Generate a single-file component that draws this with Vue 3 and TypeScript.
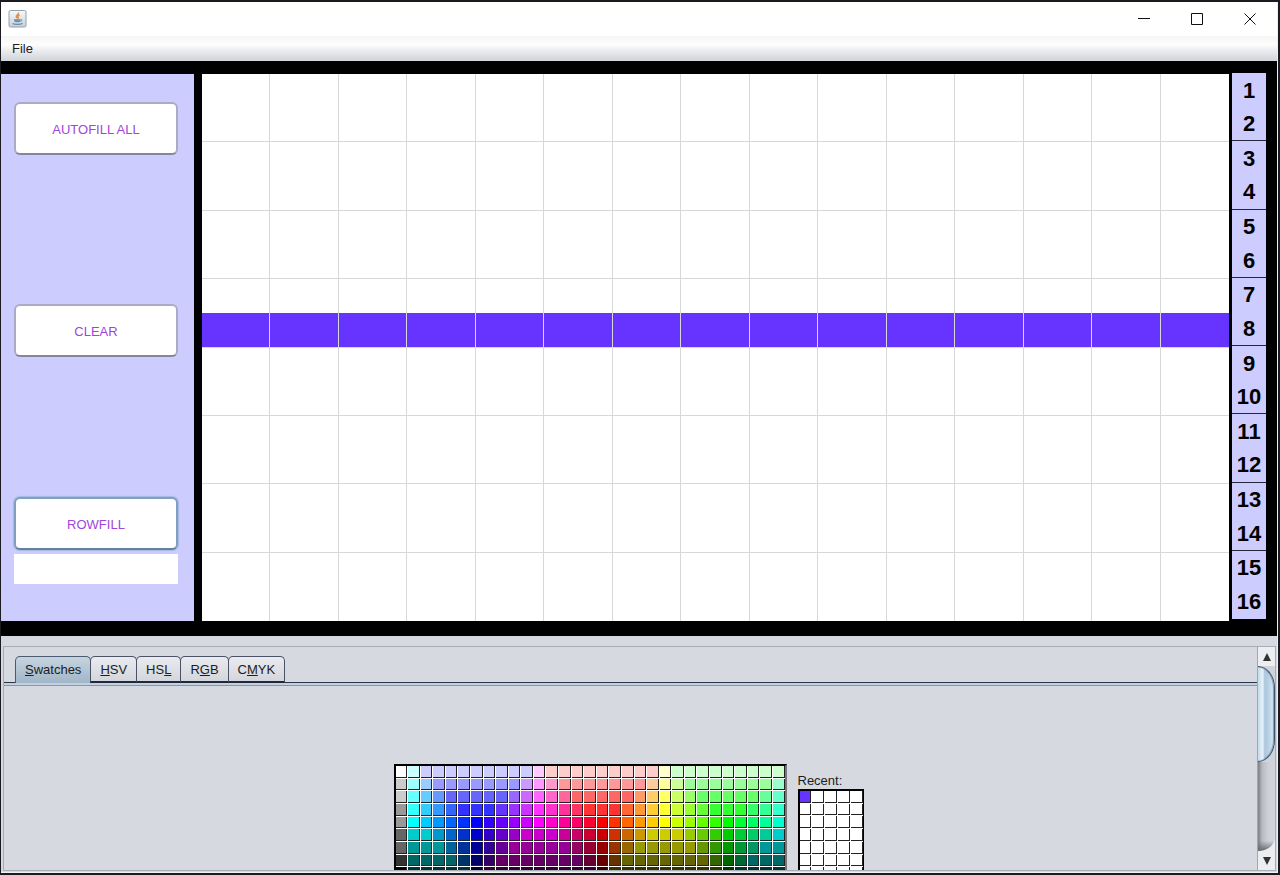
<script setup lang="ts">
import { computed, ref } from 'vue'

type Rgb = [number, number, number]

const COLUMNS = 15
const ROWS = 16

const paint = ref('#6633ff')
const rowInput = ref('')
const cells = ref<string[][]>(
  Array.from({ length: ROWS }, (_, r) => Array.from({ length: COLUMNS }, () => (r === 7 ? '#6633ff' : '#ffffff'))),
)

const fillRow = (row: number, color: string) => {
  if (cells.value[row]) cells.value[row] = cells.value[row].map(() => color)
}
const fillAll = (color: string) => cells.value.forEach((_, r) => fillRow(r, color))
const fillTypedRow = () => fillRow(Number(rowInput.value) - 1, paint.value)

// Thirty fully saturated hues: cyan, blue, magenta, red, yellow, green.
const hues: Rgb[] = []
const steps = [0, 51, 102, 153, 204]
steps.forEach((s) => hues.push([0, 255 - s, 255]))
steps.forEach((s) => hues.push([s, 0, 255]))
steps.forEach((s) => hues.push([255, 0, 255 - s]))
steps.forEach((s) => hues.push([255, s, 0]))
steps.forEach((s) => hues.push([255 - s, 255, 0]))
steps.forEach((s) => hues.push([0, 255, s]))

const greys = [255, 204, 204, 153, 153, 102, 102, 51, 0]
const css = (c: number[]) => `rgb(${c.join(', ')})`

// The first five rows lighten the hues, the last four darken them.
const swatches = greys.flatMap((grey, row) => [
  css([grey, grey, grey]),
  ...hues.map((hue) => css(hue.map((v) => (row < 5 ? Math.max(v, 204 - 51 * row) : Math.min(v, 204 - 51 * (row - 5)))))),
])

const recent = ref<string[]>(['#6633ff'])
const recentSlots = computed(() => Array.from({ length: 35 }, (_, i) => recent.value[i] ?? '#ffffff'))
const choose = (color: string) => {
  paint.value = color
  recent.value = [color, ...recent.value].slice(0, 35)
}

const tabs = [
  { before: '', key: 'S', after: 'watches' },
  { before: '', key: 'H', after: 'SV' },
  { before: 'HS', key: 'L', after: '' },
  { before: 'R', key: 'G', after: 'B' },
  { before: 'C', key: 'M', after: 'YK' },
]
const activeTab = ref(0)
</script>

<template>
  <div class="desktop">
    <div class="window">
      <header class="titlebar">
        <svg class="app-icon" width="20" height="20" viewBox="0 0 20 20" aria-hidden="true">
          <defs>
            <linearGradient id="tile" x1="0" y1="0" x2="0" y2="1">
              <stop offset="0" stop-color="#f7f9fa" />
              <stop offset="1" stop-color="#c6d1d8" />
            </linearGradient>
          </defs>
          <rect x="2" y="1.5" width="17" height="16.5" rx="1.5" fill="url(#tile)" stroke="#93a1ac" />
          <path d="M11.500 3.500c.6 2-2.700 2.600-2.200 4.300.2.700.9 1 1 1.700M12.500 6c-1.400.6-2 1.400-1.400 2.200.4.600.2 1-.2 1.500" fill="none" stroke="#e08a45" stroke-width="1.400" />
          <path d="M7 10.300h6.500c0 2-.8 3-2 3h-2.500c-1.200 0-2-1-2-3z" fill="#6f90a8" />
          <path d="M13.500 10.500c2-.4 1.800 1.700-.6 1.900" fill="none" stroke="#6f90a8" />
          <path d="M5.500 14.500c1.500 1.200 8.500 1.200 10-.2" fill="none" stroke="#6b8fac" stroke-width="1.200" />
        </svg>
        <div class="window-buttons">
          <button type="button" aria-label="Minimize">
            <svg width="12" height="12" viewBox="0 0 12 12"><path d="M0 5.500h12" /></svg>
          </button>
          <button type="button" aria-label="Maximize">
            <svg width="12" height="12" viewBox="0 0 12 12"><path d="M.5.5h11v11H.5z" /></svg>
          </button>
          <button type="button" aria-label="Close">
            <svg width="12" height="12" viewBox="0 0 12 12"><path d="M.5.5l11 11M11.500.5l-11 11" /></svg>
          </button>
        </div>
      </header>

      <nav class="menubar"><button type="button">File</button></nav>

      <main class="editor">
        <section class="tools">
          <button type="button" class="tool" @click="fillAll(paint)">AUTOFILL ALL</button>
          <button type="button" class="tool" @click="fillAll('#ffffff')">CLEAR</button>
          <div class="rowfill">
            <button type="button" class="tool focused" @click="fillTypedRow">ROWFILL</button>
            <input v-model="rowInput" type="text" aria-label="Row number" />
          </div>
        </section>

        <section class="canvas">
          <template v-for="(row, r) in cells" :key="r">
            <div
              v-for="(color, c) in row"
              :key="c"
              class="cell"
              :class="{ closing: r % 2 === 1 && r < ROWS - 1, last: c === COLUMNS - 1 }"
              :style="{ backgroundColor: color }"
              @click="row[c] = paint"
            ></div>
          </template>
        </section>

        <ol class="row-numbers">
          <li v-for="n in ROWS" :key="n">{{ n }}</li>
        </ol>
      </main>

      <section class="chooser">
        <div class="scroll-pane">
          <div class="view">
            <div class="tabs" role="tablist">
              <button
                v-for="(tab, i) in tabs"
                :key="i"
                type="button"
                role="tab"
                class="tab"
                :class="{ active: i === activeTab }"
                :aria-selected="i === activeTab"
                @click="activeTab = i"
              >{{ tab.before }}<u>{{ tab.key }}</u>{{ tab.after }}</button>
            </div>
            <div class="tab-rule"></div>
            <div class="palettes">
              <div class="palette main">
                <button v-for="(color, i) in swatches" :key="i" type="button" :aria-label="color" :style="{ backgroundColor: color }" @click="choose(color)"></button>
              </div>
              <div class="recent">
                <span>Recent:</span>
                <div class="palette small">
                  <button v-for="(color, i) in recentSlots" :key="i" type="button" :aria-label="color" :style="{ backgroundColor: color }" @click="paint = color"></button>
                </div>
              </div>
            </div>
          </div>
          <div class="scrollbar">
            <button type="button" aria-label="Scroll up">
              <svg width="8" height="8" viewBox="0 0 8 8"><path d="M4 0l4 8H0z" /></svg>
            </button>
            <div class="track">
              <div class="thumb"></div>
              <div class="groove"></div>
            </div>
            <button type="button" aria-label="Scroll down">
              <svg width="8" height="8" viewBox="0 0 8 8"><path d="M0 0h8L4 8z" /></svg>
            </button>
          </div>
        </div>
      </section>
    </div>
  </div>
</template>

<style>
body {
  margin: 0;
}
</style>

<style scoped>
* {
  box-sizing: border-box;
}

button {
  font: inherit;
  color: inherit;
  padding: 0;
  margin: 0;
  border: 0;
  background: none;
}

.desktop {
  height: 100vh;
  padding: 2px 2px 2px 1px;
  background: #1c1a21;
  font-family: "Liberation Sans", Arial, sans-serif;
  font-size: 13px;
  line-height: 16px;
  color: #1c1c22;
}

.window {
  height: 100%;
  display: grid;
  grid-template-rows: 34px 25px minmax(0, 575fr) minmax(0, 237fr);
  border-right: 1px solid #eceef0;
  background: #fff;
}

.titlebar {
  display: flex;
  align-items: center;
  justify-content: space-between;
  padding: 0 1px 1px 6px;
}

.window-buttons {
  display: flex;
}

.window-buttons button {
  width: 53px;
  height: 33px;
  display: grid;
  place-items: center;
}

.window-buttons svg {
  fill: none;
  stroke: #111;
}

.menubar {
  display: flex;
  align-items: center;
  padding-left: 11px;
  background: linear-gradient(#f6f6f7 0, #fdfdfd 35%, #e9ebee 60%, #d3d6dc 95%);
}

.menubar button {
  padding-top: 1px;
}

.editor {
  display: grid;
  grid-template-columns: 193px minmax(0, 1fr) 34px;
  padding: 12px 11px 15px 0;
  background: #000;
}

.tools {
  display: grid;
  grid-template-rows: 202fr 193fr auto;
  align-items: start;
  margin-top: 1px;
  padding: 28px 16px 37px 13px;
  background: #ccccff;
}

.tool {
  width: 100%;
  height: 53px;
  padding-top: 2px;
  border: 2px solid #abacc3;
  border-bottom-color: #85869a;
  border-radius: 6px;
  background: #fff;
  color: #a045dc;
}

.focused {
  border-color: #7f9fc3;
  border-bottom-color: #6581a0;
  box-shadow: 0 0 1px 1px #a5b8e0;
}

.rowfill {
  display: grid;
  gap: 4px;
}

.rowfill input {
  width: 100%;
  height: 30px;
  padding: 0 6px;
  border: 0;
  font: inherit;
  background: #fff;
}

.canvas {
  display: grid;
  grid-template-columns: repeat(15, minmax(0, 1fr));
  grid-template-rows: repeat(16, minmax(0, 1fr));
  margin: 1px 3px 0 8px;
}

.cell {
  border-right: 1px solid #d8d8d8;
}

.closing {
  border-bottom: 1px solid #d8d8d8;
}

.last {
  border-right: 0;
}

.row-numbers {
  display: grid;
  grid-template-rows: repeat(16, minmax(0, 1fr));
  margin: 0 0 2px;
  padding: 0;
  list-style: none;
  background: #ccccff;
  color: #000;
  font-size: 22px;
  font-weight: 700;
}

.row-numbers li {
  display: grid;
  place-items: center;
  padding-top: 1px;
}

.row-numbers li:nth-child(even):not(:last-child) {
  border-bottom: 1px solid #26263a;
}

.chooser {
  min-height: 0;
  padding: 10px 1px 1px 2px;
  background: #d6d9df;
  border-bottom: 1px solid #f2f3f5;
}

.scroll-pane {
  height: 100%;
  display: flex;
  overflow: hidden;
  border: 1px solid #a9acb5;
}

.view {
  flex: 1;
  min-width: 0;
  overflow: hidden;
  padding-top: 9px;
}

.tabs {
  display: flex;
  padding-left: 11px;
  background: linear-gradient(#2c3447, #2c3447) left bottom / 100% 1px no-repeat;
}

.tab {
  height: 27px;
  padding: 2px 9px 0;
  border: 1px solid #4b5265;
  border-bottom: 2px solid #222838;
  border-radius: 5px 5px 0 0;
  background: linear-gradient(#e9ebef, #d3d6dc);
}

.tab + .tab {
  margin-left: -1px;
}

.active {
  padding-bottom: 2px;
  border-bottom: 0;
  border-color: #4b5a70;
  background: linear-gradient(#c7d4df, #a1b6c8);
}

.tab-rule {
  height: 3px;
  border-bottom: 1px solid #7e98b5;
  background: #c1d1e1;
}

.palettes {
  display: flex;
  align-items: flex-start;
  justify-content: center;
  gap: 11px;
  padding: 78px 4px 0 0;
}

.palette {
  display: grid;
  gap: 1px;
  border: 2px solid #000;
  background: #fff;
}

.palette button {
  border: solid #222;
  border-width: 0 1px 1px 0;
}

.main {
  width: 393px;
  height: 117px;
  border-right-color: #777;
  grid-template-columns: repeat(31, minmax(0, 1fr));
  grid-template-rows: repeat(9, minmax(0, 1fr));
}

.recent {
  padding-top: 9px;
}

.recent span {
  display: block;
}

.small {
  width: 66px;
  height: 92px;
  border-right-width: 1px;
  grid-template-columns: repeat(5, minmax(0, 1fr));
  grid-template-rows: repeat(7, minmax(0, 1fr));
}

.scrollbar {
  width: 18px;
  display: flex;
  flex-direction: column;
  border-left: 1px solid #a3a6ae;
  background: #eceef1;
}

.scrollbar button {
  height: 19px;
  display: grid;
  place-items: center;
}

.scrollbar svg {
  fill: #333;
}

.track {
  flex: 1;
  min-height: 0;
  display: flex;
  flex-direction: column;
  background: linear-gradient(#d0d3d9 80%, #eceef1 80%);
}

.thumb {
  flex: 95;
  border: 1px solid #3f556e;
  border-left: 0;
  border-radius: 0 17px 17px 0 / 0 22px 22px 0;
  box-shadow: inset -1px 0 1px #7f99b3;
  background: linear-gradient(to right, #c4dbed 0, #e6f2fa 30%, #adc6dc 42%, #b9d0e3 65%, #d9effc 100%);
}

.groove {
  flex: 90;
  border-radius: 0 0 17px 0 / 0 0 14px 0;
  background:
    linear-gradient(to top, #66686e 0, transparent 10px),
    linear-gradient(to right, #7c7e84 0, #b9bbc2 25%, #cdd0d6 60%, #d3d6dc 100%);
}
</style>
